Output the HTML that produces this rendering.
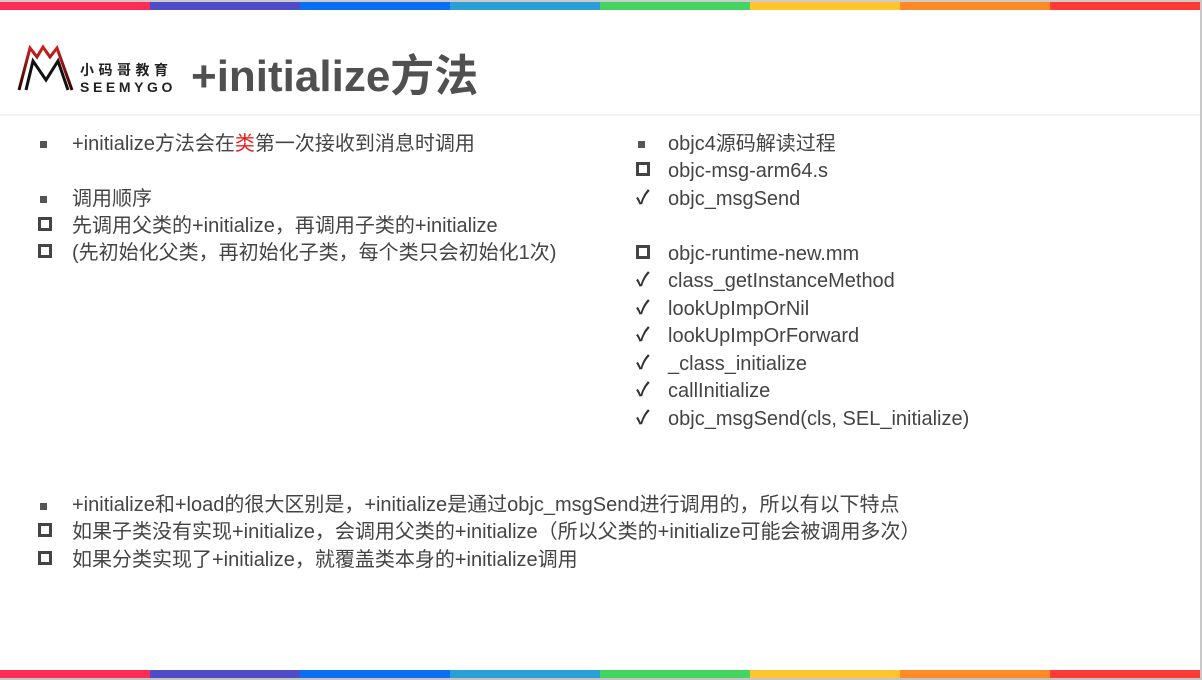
<!DOCTYPE html>
<html><head><meta charset="utf-8"><style>
*{margin:0;padding:0}
body{width:1202px;height:680px;position:relative;background:#fff;overflow:hidden;font-family:"Liberation Sans","Noto Sans CJK SC",sans-serif;color:#444}
.bar{position:absolute;left:0;width:1200px;height:8px;display:flex}
.bar div{flex:1}
.t{position:absolute;font-size:20px;white-space:nowrap;line-height:22px}
.b{position:absolute;width:7px;height:7px;background:#555}
.s{position:absolute;width:8px;height:8px;border:3px solid #444}
.c{position:absolute;font-size:19px;line-height:22px;color:#333;font-weight:bold}
</style></head><body>
<div style="position:absolute;left:0;top:0;width:1202px;height:2px;background:#ccc"></div>
<div style="position:absolute;right:0;top:0;width:2px;height:680px;background:#c8c8c8"></div>
<div style="position:absolute;left:0;top:677px;width:1202px;height:3px;background:#c4c4c4"></div>
<div class="bar" style="top:2px"><div style="background:#ff2d55"></div><div style="background:#4f4cc8"></div><div style="background:#0a6ff5"></div><div style="background:#289fd6"></div><div style="background:#44d462"></div><div style="background:#ffc42e"></div><div style="background:#ff8a26"></div><div style="background:#ff3a35"></div></div>
<div class="bar" style="top:670px"><div style="background:#ff2d55"></div><div style="background:#4f4cc8"></div><div style="background:#0a6ff5"></div><div style="background:#289fd6"></div><div style="background:#44d462"></div><div style="background:#ffc42e"></div><div style="background:#ff8a26"></div><div style="background:#ff3a35"></div></div>
<div style="position:absolute;left:0;top:114px;width:1200px;height:2px;background:#f2f2f2"></div>
<svg style="position:absolute;left:0;top:0" width="80" height="100" viewBox="0 0 80 100">
<defs><linearGradient id="g" x1="0" y1="0" x2="0" y2="1"><stop offset="0" stop-color="#d02020"/><stop offset="1" stop-color="#300"/></linearGradient></defs>
<path d="M19 90 L30 48 L37 57 L43 47 L50 57 L57 48 L72 90" fill="none" stroke="url(#g)" stroke-width="3"/>
<path d="M26 90 L33 61 L46 80 L58 61 L68 90" fill="none" stroke="#111" stroke-width="3"/>
</svg>
<div style="position:absolute;left:80px;top:61px;font-size:14px;font-weight:bold;letter-spacing:4.5px;color:#222;line-height:18px">小码哥教育</div>
<div style="position:absolute;left:80px;top:79px;font-size:14px;font-weight:bold;letter-spacing:3.6px;color:#222;line-height:16px">SEEMYGO</div>
<div style="position:absolute;left:191px;top:52px;font-size:44px;font-weight:bold;color:#505050;line-height:50px">+initialize方法</div>

<div class="b" style="left:40px;top:141px"></div><div class="t" style="left:72px;top:133px">+initialize方法会在<span style="color:#e8211e">类</span>第一次接收到消息时调用</div>
<div class="b" style="left:40px;top:196px"></div><div class="t" style="left:72px;top:188px">调用顺序</div>
<div class="s" style="left:38px;top:217px"></div><div class="t" style="left:72px;top:215px">先调用父类的+initialize，再调用子类的+initialize</div>
<div class="s" style="left:38px;top:244px"></div><div class="t" style="left:72px;top:242px">(先初始化父类，再初始化子类，每个类只会初始化1次)</div>

<div class="b" style="left:638px;top:141px"></div><div class="t" style="left:668px;top:133px">objc4源码解读过程</div>
<div class="s" style="left:636px;top:162px"></div><div class="t" style="left:668px;top:160px">objc-msg-arm64.s</div>
<div class="c" style="left:636px;top:188px">✓</div><div class="t" style="left:668px;top:188px">objc_msgSend</div>
<div class="s" style="left:636px;top:245px"></div><div class="t" style="left:668px;top:243px">objc-runtime-new.mm</div>
<div class="c" style="left:636px;top:270px">✓</div><div class="t" style="left:668px;top:270px">class_getInstanceMethod</div>
<div class="c" style="left:636px;top:298px">✓</div><div class="t" style="left:668px;top:298px">lookUpImpOrNil</div>
<div class="c" style="left:636px;top:325px">✓</div><div class="t" style="left:668px;top:325px">lookUpImpOrForward</div>
<div class="c" style="left:636px;top:353px">✓</div><div class="t" style="left:668px;top:353px">_class_initialize</div>
<div class="c" style="left:636px;top:380px">✓</div><div class="t" style="left:668px;top:380px">callInitialize</div>
<div class="c" style="left:636px;top:408px">✓</div><div class="t" style="left:668px;top:408px">objc_msgSend(cls, SEL_initialize)</div>

<div class="b" style="left:40px;top:503px"></div><div class="t" style="left:72px;top:494px">+initialize和+load的很大区别是，+initialize是通过objc_msgSend进行调用的，所以有以下特点</div>
<div class="s" style="left:38px;top:523px"></div><div class="t" style="left:72px;top:521px">如果子类没有实现+initialize，会调用父类的+initialize（所以父类的+initialize可能会被调用多次）</div>
<div class="s" style="left:38px;top:551px"></div><div class="t" style="left:72px;top:549px">如果分类实现了+initialize，就覆盖类本身的+initialize调用</div>
</body></html>
